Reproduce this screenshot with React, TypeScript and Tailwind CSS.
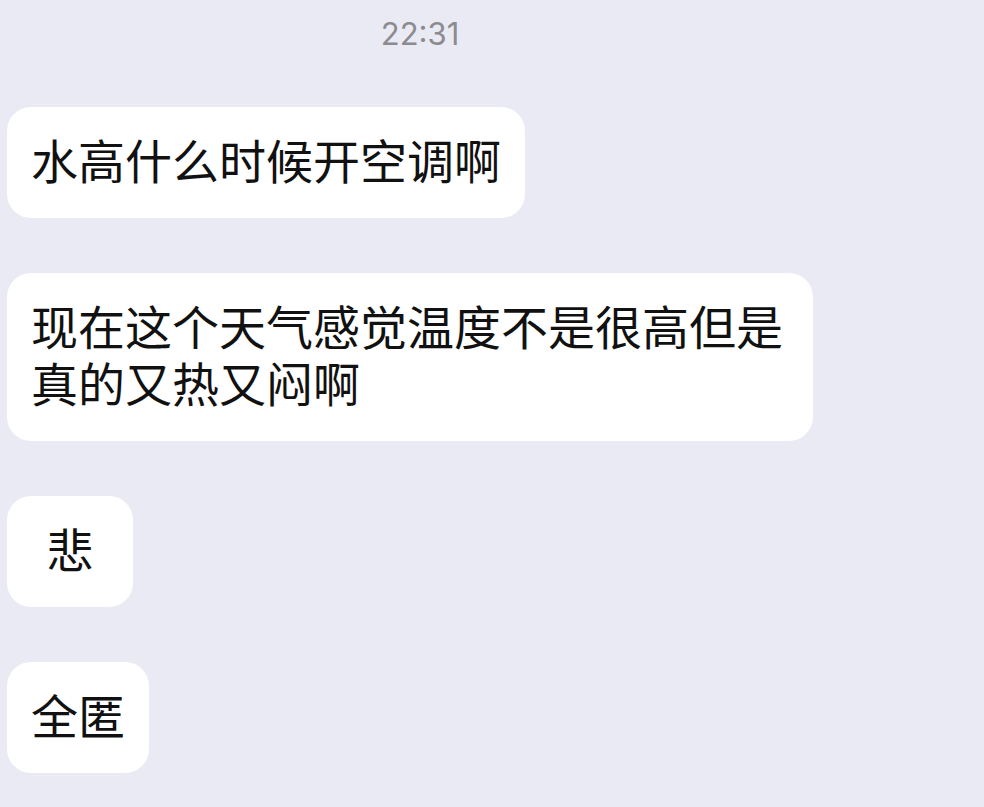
export default function App() {
  const messages = [
    { text: "水高什么时候开空调啊" },
    { text: "现在这个天气感觉温度不是很高但是真的又热又闷啊" },
    { text: "悲", center: true },
    { text: "全匿" },
  ];
  return (
    <div className="w-[984px] h-[807px] overflow-hidden bg-[#e9eaf4] pl-[7px] pt-[14px] font-['Noto_Sans_CJK_SC','Noto_Sans',sans-serif]">
      <div className="w-[826px] text-center text-[31px] leading-[40px] text-[#8b8b90] font-['Inter','Noto_Sans_CJK_SC',sans-serif]">
        22:31
      </div>
      <div className="mt-[53px] flex flex-col items-start gap-[55px]">
        {messages.map((m, i) => (
          <div
            key={i}
            className={
              m.center
                ? "bg-white rounded-[24px] px-[24px] pt-[23px] pb-[31px] text-[47px] leading-[57px] text-[#111111] min-w-[126px] text-center"
                : "bg-white rounded-[24px] px-[24px] pt-[23px] pb-[31px] text-[47px] leading-[57px] text-[#111111] max-w-[806px]"
            }
          >
            {m.text}
          </div>
        ))}
      </div>
    </div>
  );
}
